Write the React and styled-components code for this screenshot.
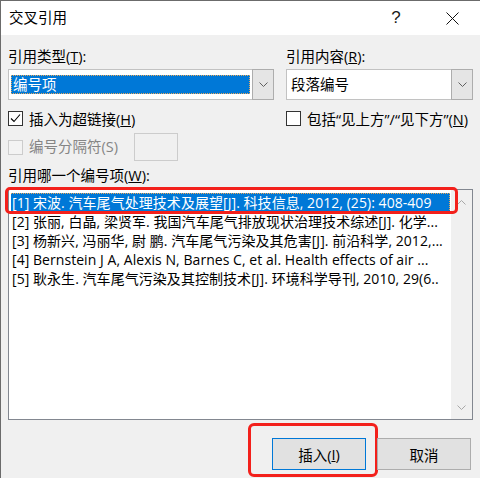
import styled, { createGlobalStyle } from 'styled-components';

const GlobalStyle = createGlobalStyle`
  html, body {
    margin: 0;
    padding: 0;
    background: #f0f0f0;
  }
  body {
    font-family: "Open Sans", "Noto Sans CJK SC", sans-serif;
    font-size: 14.5px;
    color: #000;
  }
`;

const Dialog = styled.div`
  width: 480px;
  height: 478px;
  box-sizing: border-box;
  border-top: 1px solid #6b6b6b;
  border-left: 1px solid #6b6b6b;
  display: flex;
  flex-direction: column;
  background: #f0f0f0;
  overflow: hidden;
`;

const TitleBar = styled.div`
  height: 34px;
  background: #fff;
  display: flex;
  align-items: center;
  padding-left: 8px;
`;

const Title = styled.div`
  flex: 1;
  line-height: 20px;
`;

const TitleButton = styled.div`
  width: 56px;
  height: 34px;
  display: flex;
  align-items: center;
  justify-content: center;
  font-family: "Liberation Sans", sans-serif;
  font-size: 17px;
  color: #1a1a1a;
`;

const Body = styled.div`
  flex: 1;
  display: flex;
  flex-direction: column;
  padding: 12px 7px 8px 7px;
`;

const TopGrid = styled.div`
  display: grid;
  grid-template-columns: 266px 1fr;
  column-gap: 12px;
`;

const Field = styled.div`
  display: flex;
  flex-direction: column;
`;

const Label = styled.div`
  line-height: 20px;
  margin-bottom: ${({ $gap }) => $gap || 0}px;
  margin-top: ${({ $top }) => $top || 0}px;
  color: ${({ $disabled }) => ($disabled ? '#858585' : '#000')};
  white-space: nowrap;
`;

const Key = styled.span`
  text-decoration: underline;
`;

const Combo = styled.div`
  display: flex;
  height: 31px;
  box-sizing: border-box;
  border: 1px solid #c2c2c2;
  background: #fff;
`;

const ComboValue = styled.div`
  flex: 1;
  display: flex;
  align-items: center;
  padding: 0 2px;
`;

const ComboText = styled.div`
  flex: 1;
  height: 19px;
  line-height: 19px;
  box-sizing: border-box;
  padding: 0 1px;
  background: ${({ $active }) => ($active ? '#0078d7' : 'transparent')};
  color: ${({ $active }) => ($active ? '#fff' : '#000')};
  border: 1px dotted ${({ $active }) => ($active ? '#e9a85a' : 'transparent')};
  display: flex;
  align-items: center;
`;

const ComboButton = styled.div`
  width: 20px;
  margin: -1px -1px -1px 0;
  border: 1px solid #adadad;
  background: #e5e5e5;
  display: flex;
  align-items: center;
  justify-content: center;
`;

const CheckRow = styled.div`
  display: flex;
  align-items: center;
  gap: 6px;
  height: 20px;
  margin-top: 8px;
  white-space: nowrap;
`;

const Box = styled.span`
  width: 15px;
  height: 15px;
  box-sizing: border-box;
  flex: none;
  border: 1px solid ${({ $disabled }) => ($disabled ? '#cccccc' : '#333')};
  background: ${({ $disabled }) => ($disabled ? '#f3f3f3' : '#fff')};
  display: flex;
  align-items: center;
  justify-content: center;
`;

const DisabledRow = styled.div`
  display: flex;
  align-items: center;
  gap: 6px;
  height: 28px;
  margin-top: 5px;
`;

const SeparatorBox = styled.div`
  width: 44px;
  height: 28px;
  box-sizing: border-box;
  margin-left: 10px;
  border: 1px solid #cccccc;
  background: #f0f0f0;
`;

const ListBox = styled.div`
  height: 231px;
  margin-top: 3px;
  box-sizing: border-box;
  border: 1px solid #828790;
  background: #fff;
  display: flex;
`;

const Items = styled.div`
  flex: 1;
  min-width: 0;
  display: flex;
  flex-direction: column;
  padding: 3px 1px 0 2px;
`;

const Row = styled.div`
  position: relative;
  height: 19px;
  box-sizing: border-box;
  padding: 0 1px;
  background: ${({ $selected }) => ($selected ? '#0078d7' : 'transparent')};
  color: ${({ $selected }) => ($selected ? '#fff' : '#000')};
  border: 1px dotted ${({ $selected }) => ($selected ? '#e9a85a' : 'transparent')};
  border-left-width: 0;

  &::after {
    content: '';
    display: ${({ $selected }) => ($selected ? 'block' : 'none')};
    position: absolute;
    top: -7px;
    left: -6px;
    right: -9px;
    bottom: -3px;
    border: 3px solid #f3201b;
    border-radius: 5px;
  }
`;

const RowText = styled.div`
  white-space: nowrap;
  overflow: hidden;
  font-size: 14px;
  letter-spacing: 0.05px;
  line-height: 17px;
`;

const Scrollbar = styled.div`
  width: 21px;
  background: #f0f0f0;
  display: flex;
  flex-direction: column;
  justify-content: space-between;
  align-items: center;
  padding: 10px 0 9px;
`;

const Footer = styled.div`
  display: flex;
  justify-content: flex-end;
  gap: 11px;
  margin-top: 18px;
  padding-right: 2px;
`;

const Button = styled.div`
  position: relative;
  width: 94px;
  height: 32px;
  box-sizing: border-box;
  border: 1px solid ${({ $primary }) => ($primary ? '#0078d7' : '#adadad')};
  background: #e1e1e1;
  display: flex;
  align-items: center;
  justify-content: center;

  &::after {
    content: '';
    display: ${({ $marked }) => ($marked ? 'block' : 'none')};
    position: absolute;
    top: -16px;
    left: -25px;
    right: -13px;
    bottom: -8px;
    border: 3px solid #f3201b;
    border-radius: 6px;
  }
`;

const Chevron = ({ up, color = '#606060' }) => (
  <svg width="9" height="5" viewBox="0 0 9 5">
    <path
      d={up ? 'M0.5 4.5 L4.5 0.5 L8.5 4.5' : 'M0.5 0.5 L4.5 4.5 L8.5 0.5'}
      fill="none"
      stroke={color}
      strokeWidth="1"
    />
  </svg>
);

const Check = () => (
  <svg width="13" height="13" viewBox="0 0 13 13">
    <path d="M2 6.5 L5 9.5 L11 2.5" fill="none" stroke="#000" strokeWidth="1.1" />
  </svg>
);

const items = [
  '[1] 宋波. 汽车尾气处理技术及展望[J]. 科技信息, 2012, (25): 408-409',
  '[2] 张丽, 白晶, 梁贤军. 我国汽车尾气排放现状治理技术综述[J]. 化学...',
  '[3] 杨新兴, 冯丽华, 尉 鹏. 汽车尾气污染及其危害[J]. 前沿科学, 2012,...',
  '[4] Bernstein J A, Alexis N, Barnes C, et al. Health effects of air ...',
  '[5] 耿永生. 汽车尾气污染及其控制技术[J]. 环境科学导刊, 2010, 29(6..',
];

export default function App() {
  return (
    <>
      <GlobalStyle />
      <Dialog>
        <TitleBar>
          <Title>交叉引用</Title>
          <TitleButton>?</TitleButton>
          <TitleButton>
            <svg width="13" height="13" viewBox="0 0 13 13">
              <path d="M0.5 0.5 L12.5 12.5 M12.5 0.5 L0.5 12.5" stroke="#111" strokeWidth="1" />
            </svg>
          </TitleButton>
        </TitleBar>

        <Body>
          <TopGrid>
            <Field>
              <Label $gap={2}>引用类型(<Key>T</Key>):</Label>
              <Combo>
                <ComboValue>
                  <ComboText $active>编号项</ComboText>
                </ComboValue>
                <ComboButton>
                  <Chevron />
                </ComboButton>
              </Combo>
            </Field>
            <Field>
              <Label $gap={2}>引用内容(<Key>R</Key>):</Label>
              <Combo>
                <ComboValue>
                  <ComboText>段落编号</ComboText>
                </ComboValue>
                <ComboButton>
                  <Chevron />
                </ComboButton>
              </Combo>
            </Field>
            <CheckRow>
              <Box>
                <Check />
              </Box>
              <span>插入为超链接(<Key>H</Key>)</span>
            </CheckRow>
            <CheckRow>
              <Box />
              <span>包括“见上方”/“见下方”(<Key>N</Key>)</span>
            </CheckRow>
          </TopGrid>

          <DisabledRow>
            <Box $disabled />
            <Label $disabled>编号分隔符(S)</Label>
            <SeparatorBox />
          </DisabledRow>

          <Label $top={5}>引用哪一个编号项(<Key>W</Key>):</Label>
          <ListBox>
            <Items>
              {items.map((text, i) => (
                <Row key={i} $selected={i === 0}>
                  <RowText>{text}</RowText>
                </Row>
              ))}
            </Items>
            <Scrollbar>
              <Chevron up color="#a8a8a8" />
              <Chevron color="#a8a8a8" />
            </Scrollbar>
          </ListBox>

          <Footer>
            <Button $primary $marked>插入(<Key>I</Key>)</Button>
            <Button>取消</Button>
          </Footer>
        </Body>
      </Dialog>
    </>
  );
}
